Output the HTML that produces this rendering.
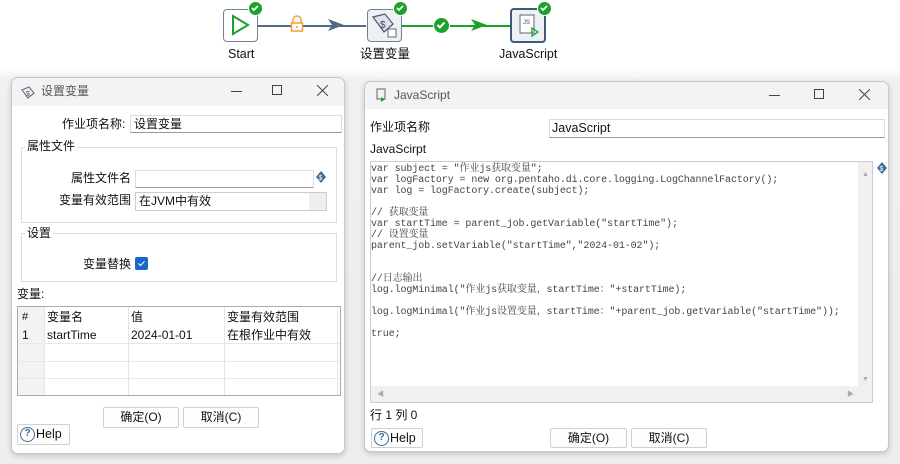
<!DOCTYPE html>
<html><head><meta charset="utf-8">
<style>
*{box-sizing:border-box;margin:0;padding:0}
body{width:900px;height:464px;overflow:hidden;position:relative;background:linear-gradient(#fff 0,#fff 68px,#f0f0f0 80px,#eeeeee 100%);font-family:"Liberation Sans","Noto Sans CJK SC",sans-serif;font-size:12px;line-height:16px;color:#111}
.a{position:absolute}
.dlg{position:absolute;background:#f0f0f0;border:1px solid #c8c8c8;border-radius:7px;box-shadow:0 2px 6px rgba(0,0,0,.18);overflow:hidden}
.tb{position:absolute;left:0;right:0;top:0;height:28px;background:#f3f3f3;color:#555}
.body{position:absolute;background:#fff}
.inp{position:absolute;background:#fff;border:1px solid #ddd;border-bottom:1px solid #999}
.grp{position:absolute;border:1px solid #ddd}
.btn{position:absolute;background:#fdfdfd;border:1px solid #d0d0d0;border-radius:2px;text-align:center;line-height:19px;font-size:12px}
.help{display:flex;align-items:center;padding-left:2px;font-size:12.5px}
.q{display:block;width:15px;height:15px;border:1.5px solid #3d6b9a;border-radius:50%;text-align:center;line-height:12px;font-size:10px;color:#3d6b9a;margin-right:1px;font-weight:bold}
.code{position:absolute;font-family:"Liberation Mono","Noto Serif CJK SC",monospace;font-size:10px;line-height:11px;color:#444;white-space:pre;letter-spacing:-0.1px}
.chk{width:15px;height:15px;border-radius:50%;background:#1aa32b;border:1.5px solid #fff}
</style></head><body>

<!-- top flow -->
<div class="a" style="left:223px;top:9px;width:35px;height:33px;border:1.5px solid #6b8299;border-radius:4px;background:#fff">
<svg width="32" height="30" viewBox="0 0 32 30"><path d="M9 6 L24 15 L9 24 Z" fill="none" stroke="#1aa32b" stroke-width="2"/></svg></div>
<div class="a chk" style="left:248px;top:1px"><svg width="12" height="12" viewBox="0 0 12 12"><path d="M3 6l2 2 4-4" stroke="#fff" stroke-width="1.8" fill="none"/></svg></div>
<div class="a" style="left:258px;top:25px;width:108px;height:1.5px;background:#4e6a85"></div>
<svg class="a" style="left:328px;top:19px" width="16" height="12"><path d="M0 0L16 6L0 12L4 6Z" fill="#4e6a85"/></svg>
<svg class="a" style="left:290px;top:15px" width="14" height="18"><path d="M3 8V5a4 4 0 0 1 8 0v3" fill="none" stroke="#f0a030" stroke-width="1.5"/><rect x="1.5" y="8" width="11" height="8" fill="#fff" stroke="#f0a030" stroke-width="1.5"/><circle cx="7" cy="12" r="1" fill="#f0a030"/></svg>
<div class="a" style="left:228px;top:46px;font-size:12.5px">Start</div>

<div class="a" style="left:367px;top:9px;width:35px;height:33px;border:1.5px solid #6b8299;border-radius:4px;background:#eef1f4">
<svg width="32" height="30" viewBox="0 0 32 30"><path d="M5 7l12-3 8 10-9 8z" fill="#dde3ea" stroke="#556" stroke-width="1.2"/><text x="12" y="18" font-size="10" fill="#446" font-family="Liberation Sans">$</text><rect x="20" y="19" width="8" height="8" fill="#fff" stroke="#667"/></svg></div>
<div class="a chk" style="left:393px;top:1px"><svg width="12" height="12" viewBox="0 0 12 12"><path d="M3 6l2 2 4-4" stroke="#fff" stroke-width="1.8" fill="none"/></svg></div>
<div class="a" style="left:402px;top:25px;width:108px;height:1.5px;background:#1aa32b"></div>
<div class="a chk" style="left:433px;top:17px;width:17px;height:17px"><svg width="14" height="14" viewBox="0 0 12 12"><path d="M3 6l2 2 4-4" stroke="#fff" stroke-width="1.8" fill="none"/></svg></div>
<svg class="a" style="left:471px;top:19px" width="16" height="12"><path d="M0 0L16 6L0 12L4 6Z" fill="#1aa32b"/></svg>
<div class="a" style="left:360px;top:46px;font-size:12.5px">设置变量</div>

<div class="a" style="left:510px;top:8px;width:36px;height:35px;border:2.5px solid #3d5a78;border-radius:4px;background:#eef1f4">
<svg width="32" height="30" viewBox="0 0 32 30"><path d="M8 5h14v18H8z" fill="#fff" stroke="#667"/><text x="11" y="14" font-size="6" fill="#446" font-family="Liberation Sans">JS</text><path d="M20 18l6 4-6 4z" fill="none" stroke="#1aa32b" stroke-width="1.3"/></svg></div>
<div class="a chk" style="left:537px;top:1px"><svg width="12" height="12" viewBox="0 0 12 12"><path d="M3 6l2 2 4-4" stroke="#fff" stroke-width="1.8" fill="none"/></svg></div>
<div class="a" style="left:499px;top:46px;font-size:12.5px">JavaScript</div>

<!-- left dialog -->
<div class="dlg" style="left:11px;top:77px;width:334px;height:377px">
 <div class="tb"><svg class="a" style="left:9px;top:7px" width="16" height="14"><path d="M1 5l7-3 5 6-6 5z" fill="none" stroke="#567" stroke-width="1"/><text x="5" y="11" font-size="7" fill="#456">$</text></svg>
 <div class="a" style="left:29px;top:5px;font-size:12px">设置变量</div>
 <div class="a" style="left:219px;top:13px;width:11px;height:1px;background:#444"></div>
 <div class="a" style="left:260px;top:7px;width:10px;height:10px;border:1px solid #444"></div>
 <svg class="a" style="left:305px;top:7px" width="11" height="11"><path d="M0 0L11 11M11 0L0 11" stroke="#444"/></svg></div>
 <div class="body" style="left:0;top:28px;width:332px;height:348px;background:#fff"></div>
 <div class="a" style="left:50px;top:38px">作业项名称:</div>
 <div class="inp" style="left:118px;top:37px;width:212px;height:18px;padding-left:3px;line-height:16px">设置变量</div>
 <div class="grp" style="left:9px;top:69px;width:316px;height:76px"></div>
 <div class="a" style="left:13px;top:60px;background:#fff;padding:0 2px">属性文件</div>
 <div class="a" style="left:59px;top:92px">属性文件名</div>
 <div class="inp" style="left:123px;top:92px;width:179px;height:18px"></div>
 <svg class="a" style="left:303px;top:92px" width="12" height="14"><path d="M6 1L11 7 6 13 1 7z" fill="#3d6b9a"/><text x="3.5" y="10" font-size="7" fill="#fff">$</text></svg>
 <div class="a" style="left:47px;top:114px">变量有效范围</div>
 <div class="inp" style="left:123px;top:114px;width:192px;height:19px;border:1px solid #ccc;padding-left:3px;line-height:17px;background:linear-gradient(90deg,#fff 173px,#eee 173px)">在JVM中有效</div>
 <div class="grp" style="left:9px;top:155px;width:316px;height:49px"></div>
 <div class="a" style="left:13px;top:147px;background:#fff;padding:0 2px">设置</div>
 <div class="a" style="left:71px;top:178px">变量替换</div>
 <div class="a" style="left:123px;top:179px;width:13px;height:13px;background:#1c68c8;border-radius:2px"><svg width="13" height="13"><path d="M3.5 6.5l2 2 4-4" stroke="#fff" fill="none"/></svg></div>
 <div class="a" style="left:5px;top:208px">变量:</div>
 <div class="a" style="left:5px;top:228px;width:324px;height:90px;border:1px solid #aaa;background:#fff">
  <div class="a" style="left:0;top:0;width:26px;height:88px;background:#f3f3f3"></div>
  <div class="a" style="left:26px;top:0;width:1px;height:88px;background:#e4e4e4"></div>
  <div class="a" style="left:110px;top:0;width:1px;height:88px;background:#e4e4e4"></div>
  <div class="a" style="left:206px;top:0;width:1px;height:88px;background:#e4e4e4"></div>
  <div class="a" style="left:319px;top:0;width:1px;height:88px;background:#e4e4e4"></div>
  <div class="a" style="left:0;top:36px;width:322px;height:1px;background:#e8e8e8"></div>
  <div class="a" style="left:0;top:54px;width:322px;height:1px;background:#e8e8e8"></div>
  <div class="a" style="left:0;top:71px;width:322px;height:1px;background:#e8e8e8"></div>
  <div class="a" style="left:4px;top:2px;font-size:11px">#</div>
  <div class="a" style="left:29px;top:2px">变量名</div>
  <div class="a" style="left:113px;top:2px">值</div>
  <div class="a" style="left:209px;top:2px">变量有效范围</div>
  <div class="a" style="left:4px;top:20px">1</div>
  <div class="a" style="left:29px;top:20px">startTime</div>
  <div class="a" style="left:113px;top:20px">2024-01-01</div>
  <div class="a" style="left:209px;top:20px">在根作业中有效</div>
 </div>
 <div class="btn" style="left:91px;top:329px;width:76px;height:21px">确定(O)</div>
 <div class="btn" style="left:171px;top:329px;width:76px;height:21px">取消(C)</div>
 <div class="btn help" style="left:5px;top:346px;width:53px;height:21px"><span class="q">?</span>Help</div>
</div>

<!-- right dialog -->
<div class="dlg" style="left:364px;top:81px;width:525px;height:371px">
 <div class="tb" style="height:27px"><svg class="a" style="left:9px;top:6px" width="14" height="15"><path d="M3 1h8v10H3z" fill="none" stroke="#567"/><path d="M7 9l4 2.5-4 2.5z" fill="#1aa32b"/></svg>
 <div class="a" style="left:29px;top:5px;font-size:12px">JavaScript</div>
 <div class="a" style="left:404px;top:13px;width:11px;height:1px;background:#444"></div>
 <div class="a" style="left:449px;top:7px;width:10px;height:10px;border:1px solid #444"></div>
 <svg class="a" style="left:494px;top:7px" width="11" height="11"><path d="M0 0L11 11M11 0L0 11" stroke="#444"/></svg></div>
 <div class="body" style="left:0;top:27px;width:523px;height:343px"></div>
 <div class="a" style="left:5px;top:37px">作业项名称</div>
 <div class="inp" style="left:184px;top:37px;width:336px;height:19px;padding-left:2px;line-height:17px;font-size:12.5px">JavaScript</div>
 <div class="a" style="left:5px;top:59px">JavaScirpt</div>
 <div class="a" style="left:5px;top:79px;width:503px;height:242px;border:1px solid #ccc;background:#f0f0f0">
  <div class="a" style="left:0;top:0;width:487px;height:224px;background:#fff"></div>
  <div class="code" style="left:0;top:2px">var subject = "作业js获取变量";
var logFactory = new org.pentaho.di.core.logging.LogChannelFactory();
var log = logFactory.create(subject);

// 获取变量
var startTime = parent_job.getVariable("startTime");
// 设置变量
parent_job.setVariable("startTime","2024-01-02");


//日志输出
log.logMinimal("作业js获取变量，startTime："+startTime);

log.logMinimal("作业js设置变量，startTime："+parent_job.getVariable("startTime"));

true;</div>
  <div class="a" style="left:491px;top:5px;font-size:7px;color:#aaa">▲</div>
  <div class="a" style="left:491px;top:210px;font-size:7px;color:#aaa">▼</div>
  <div class="a" style="left:6px;top:228px;font-size:7px;color:#aaa;line-height:10px">◀</div>
  <div class="a" style="left:476px;top:228px;font-size:7px;color:#aaa;line-height:10px">▶</div>
 </div>
 <svg class="a" style="left:511px;top:79px" width="12" height="14"><path d="M6 1L11 7 6 13 1 7z" fill="#3d6b9a"/><text x="3.5" y="10" font-size="7" fill="#fff">$</text></svg>
 <div class="a" style="left:5px;top:325px">行 1 列 0</div>
 <div class="btn help" style="left:6px;top:346px;width:52px;height:20px"><span class="q">?</span>Help</div>
 <div class="btn" style="left:185px;top:346px;width:77px;height:20px">确定(O)</div>
 <div class="btn" style="left:266px;top:346px;width:76px;height:20px">取消(C)</div>
</div>
</body></html>
